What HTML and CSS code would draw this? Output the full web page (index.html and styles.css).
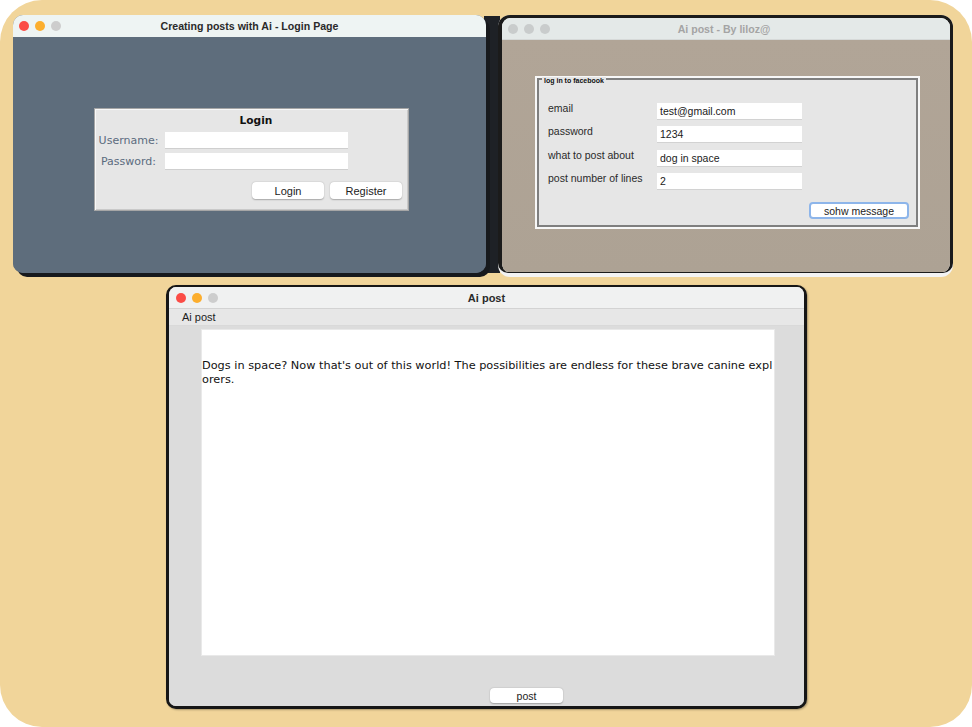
FILE: index.html
```html
<!DOCTYPE html>
<html lang="en">
<head>
<meta charset="utf-8">
<title>Ai post windows</title>
<link rel="stylesheet" href="styles.css">
</head>
<body>
<div class="desk">
  <div class="behind behind-strip"></div>

  <section class="win win-login">
    <header class="titlebar">
      <div class="lights"><span class="dot red"></span><span class="dot yellow"></span><span class="dot grey"></span></div>
      <div class="title">Creating posts with Ai - Login Page</div>
      <div></div>
    </header>
    <div class="login-body">
      <div class="login-box">
        <div class="login-title">Login</div>
        <div class="login-row"><span class="login-label">Username:</span><span class="login-field"></span></div>
        <div class="login-row"><span class="login-label">Password:</span><span class="login-field"></span></div>
        <div class="login-buttons"><span class="btn btn-login">Login</span><span class="btn btn-login">Register</span></div>
      </div>
    </div>
  </section>

  <section class="win-fb">
    <div class="fb-frame">
      <header class="titlebar titlebar-inactive">
        <div class="lights"><span class="dot off"></span><span class="dot off"></span><span class="dot off"></span></div>
        <div class="title">Ai post - By liloz@</div>
        <div></div>
      </header>
      <div class="fb-body">
        <div class="group">
          <span class="legend">log in to facebook</span>
          <div class="fb-row"><span class="fb-label">email</span><span class="fb-field">test@gmail.com</span></div>
          <div class="fb-row"><span class="fb-label">password</span><span class="fb-field">1234</span></div>
          <div class="fb-row"><span class="fb-label">what to post about</span><span class="fb-field">dog in space</span></div>
          <div class="fb-row"><span class="fb-label">post number of lines</span><span class="fb-field">2</span></div>
          <div class="fb-actions"><span class="btn btn-focus">sohw message</span></div>
        </div>
      </div>
    </div>
  </section>

  <section class="win win-post">
    <header class="titlebar titlebar-post">
      <div class="lights"><span class="dot red"></span><span class="dot yellow"></span><span class="dot grey"></span></div>
      <div class="title">Ai post</div>
      <div></div>
    </header>
    <nav class="menubar"><span class="menu-item">Ai post</span></nav>
    <div class="post-body">
      <div class="textarea">
        <div class="text-line">Dogs in space? Now that's out of this world! The possibilities are endless for these brave canine expl</div>
        <div class="text-line">orers.</div>
      </div>
      <div class="post-actions"><span class="btn btn-post">post</span></div>
    </div>
  </section>
</div>
</body>
</html>
```
FILE: styles.css
```css
* { box-sizing: border-box; }

html, body {
  margin: 0;
  padding: 0;
  background: #ffffff;
}

body {
  font-family: "Liberation Sans", Arial, sans-serif;
  color: #1d1d1d;
}

.desk {
  position: relative;
  width: 972px;
  height: 727px;
  background: #f1d59a;
  border-radius: 42px;
  overflow: hidden;
}

.behind {
  position: absolute;
  background: #1e2126;
}

.behind-strip {
  left: 484px;
  top: 16px;
  width: 16px;
  height: 257px;
}

/* ---------- generic window parts ---------- */
.win {
  position: absolute;
  display: flex;
  flex-direction: column;
  overflow: hidden;
}

.titlebar {
  display: grid;
  grid-template-columns: 1fr auto 1fr;
  align-items: center;
  height: 22px;
  flex: none;
  background: #eef4f3;
}

.lights {
  display: flex;
  gap: 6px;
  padding-left: 6px;
}

.dot {
  width: 10px;
  height: 10px;
  border-radius: 50%;
  display: block;
}
.dot.red { background: #fb4c46; }
.dot.yellow { background: #fcae2e; }
.dot.grey { background: #cdcdcd; }
.dot.off { background: #c9cccc; }

.title {
  font-weight: bold;
  font-size: 10.6px;
  color: #2a2a2a;
  white-space: nowrap;
}

.btn {
  display: flex;
  align-items: center;
  justify-content: center;
  background: #ffffff;
  border-radius: 4px;
  color: #222;
  font-size: 11px;
  box-shadow: 0 0.5px 1.5px rgba(0,0,0,0.28);
}

/* ---------- login window ---------- */
.win-login {
  left: 13px;
  top: 15px;
  width: 473px;
  height: 258px;
  border-radius: 10px;
  box-shadow: 4px 4px 0 #17191c;
  background: #5e6d7c;
}

.login-body {
  flex: 1;
  background: #5e6d7c;
  padding: 71px 0 0 81px;
}

.login-box {
  width: 315px;
  height: 103px;
  background: #e6e6e6;
  border: 1px solid #a6a6a6;
  box-shadow: inset 1px 1px 0 #f8f8f8, inset -1px -1px 0 #c9c9c9;
  padding: 3px 6px 0 1px;
  display: flex;
  flex-direction: column;
}

.login-title {
  text-align: center;
  font-weight: bold;
  font-size: 10.6px;
  line-height: 16px;
  height: 16px;
  color: #111;
  padding-left: 14px;
  font-family: "DejaVu Sans", sans-serif;
}

.login-row {
  display: flex;
  align-items: center;
  margin-top: 4px;
  height: 16px;
}
.login-row + .login-row { margin-top: 5px; }

.login-label {
  width: 67px;
  text-align: center;
  font-family: "DejaVu Sans", sans-serif;
  font-size: 11px;
  color: #5b6b7e;
  margin-right: 2px;
  padding-right: 2px;
}

.login-field {
  width: 183px;
  height: 16px;
  background: #ffffff;
  box-shadow: 0 1px 0 #cfcfcf;
}

.login-buttons {
  display: flex;
  justify-content: flex-end;
  gap: 6px;
  margin-top: 13px;
}

.btn-login {
  width: 72px;
  height: 17px;
  font-size: 11px;
}

/* ---------- facebook window ---------- */
.win-fb {
  position: absolute;
  left: 498px;
  top: 15px;
  width: 455px;
  height: 262px;
  background: #f3f3f3;
  border-radius: 12px;
}

.fb-frame {
  height: 258px;
  border: 3px solid #1b1b1b;
  border-left-width: 4px;
  border-bottom-width: 1px;
  border-radius: 12px 12px 10px 10px;
  overflow: hidden;
  display: flex;
  flex-direction: column;
}

.titlebar-inactive {
  background: #e4e9e8;
  border-bottom: 1px solid #d6d9d8;
}
.titlebar-inactive .lights { padding-left: 6px; gap: 6px; }
.titlebar-inactive .title { color: #a4a4a4; padding-right: 4px; }

.fb-body {
  flex: 1;
  background: linear-gradient(#b1a597, #ada294);
  padding: 36px 0 0 33px;
}

.group {
  position: relative;
  width: 385px;
  height: 153px;
  background: #e6e6e6;
  border: 2px solid #f7f7f7;
  box-shadow: inset 0 0 0 2px #7f7f7f;
  padding: 25px 9px 0 9px;
  display: flex;
  flex-direction: column;
}

.legend {
  position: absolute;
  left: 5px;
  top: -1px;
  padding: 0 2px;
  background: #e6e6e6;
  font-size: 7px;
  font-weight: bold;
  line-height: 8px;
  color: #111;
}

.fb-row {
  display: flex;
  align-items: flex-start;
  height: 16px;
  margin-bottom: 7px;
}
.fb-row:nth-child(3) { margin-bottom: 8px; }

.fb-label {
  width: 111px;
  font-size: 10.5px;
  line-height: 12px;
  color: #2a2a2a;
  padding-left: 2px;
  margin-top: -1px;
}

.fb-field {
  width: 145px;
  height: 16px;
  background: #ffffff;
  box-shadow: 0 1px 0 #d2d2d2;
  font-size: 10.5px;
  line-height: 17px;
  padding-left: 3px;
  color: #1a1a1a;
}

.fb-actions {
  display: flex;
  justify-content: flex-end;
  margin-top: 6px;
}

.btn-focus {
  width: 100px;
  height: 17px;
  border: 2px solid #8db5ea;
  border-radius: 4px;
  font-size: 10.5px;
  box-shadow: none;
}

/* ---------- post window ---------- */
.win-post {
  left: 166px;
  top: 285px;
  width: 641px;
  height: 424px;
  border: 3px solid #161616;
  border-top-width: 2px;
  border-radius: 10px;
  background: #dcdcdc;
  box-shadow: 1px 1px 2px rgba(0,0,0,0.3);
}

.titlebar-post {
  background: #f0f1f1;
  border-bottom: 1px solid #d3d3d3;
}
.titlebar-post .lights { padding-left: 7px; }
.titlebar-post .title { font-size: 11px; }

.menubar {
  height: 17px;
  flex: none;
  background: #e7e7e7;
  border-bottom: 1px solid #d9d9d9;
  display: flex;
  align-items: center;
  padding-left: 13px;
}

.menu-item {
  font-size: 11px;
  color: #1d1d1d;
}

.post-body {
  flex: 1;
  background: #dcdcdc;
  padding: 3px 0 0 32px;
  display: flex;
  flex-direction: column;
}

.textarea {
  width: 574px;
  height: 327px;
  background: #ffffff;
  border: 1px solid #e9e9e9;
  padding: 29px 0 0 0;
}

.text-line {
  font-family: "DejaVu Sans", sans-serif;
  font-size: 11.3px;
  line-height: 14px;
  color: #111;
  white-space: nowrap;
}

.post-actions {
  display: flex;
  padding-left: 289px;
  margin-top: 32px;
}

.btn-post {
  width: 73px;
  height: 15px;
  font-size: 10.5px;
}
```
